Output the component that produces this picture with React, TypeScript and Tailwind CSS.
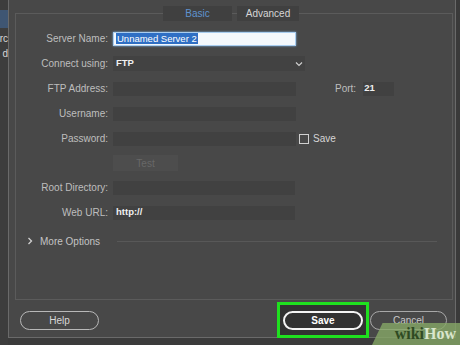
import React from "react";

function Field({ label, children }: { label: string; children?: React.ReactNode }) {
  return (
    <div className="flex h-[25px] items-center">
      <div className="w-[93px] pr-[1px] text-right text-[10px] text-[#bebebe]">{label}</div>
      <div className="ml-[4px] flex items-center">{children}</div>
    </div>
  );
}

function Box({ w, children }: { w: string; children?: React.ReactNode }) {
  return (
    <div className={`${w} flex h-[14px] items-center bg-[#414141] pl-[3px] text-[9.5px] font-semibold text-[#f0f0f0]`}>
      {children}
    </div>
  );
}

export default function App() {
  return (
    <div className="relative flex h-[345px] w-[460px] overflow-hidden bg-[#3b3b3b] font-['Liberation_Sans',Arial,sans-serif]">
      {/* sliver of the window behind */}
      <div className="flex w-[8px] flex-col overflow-hidden bg-[#3d3d3d]">
        <div className="mt-[10px] h-[18px] w-full bg-[#3f5673]" />
        <div className="mt-[4px] flex justify-end whitespace-nowrap text-[10px] leading-[13px] text-[#d8d8d8]">rc</div>
        <div className="mt-[2px] flex justify-end whitespace-nowrap text-[10px] leading-[13px] text-[#d8d8d8]">d</div>
      </div>

      {/* dialog */}
      <div className="flex h-[338px] w-[448px] flex-col border-b border-l border-r border-[#6a6a6a] bg-[#484848]">
        <div className="ml-[6px] mr-[2px] mt-[13px] flex h-[288px] flex-col border border-[#5b5b5b]">
          {/* tabs */}
          <div className="-mt-[8px] ml-[147px] flex h-[15px] gap-[5px] text-[10px]">
            <div className="flex w-[69px] items-center justify-center bg-[#404040] text-[#5f93cf]">Basic</div>
            <div className="flex w-[62px] items-center justify-center bg-[#404040] text-[#d6d6d6]">Advanced</div>
          </div>

          <div className="mt-[5px] flex flex-col">
            <Field label="Server Name:">
              <div className="flex h-[14px] w-[183px] items-center border border-[#a9cdef] bg-[#f4f8fc] pl-[2px] shadow-[0_0_2px_#7fb3e6]">
                <span className="bg-[#2f6fc4] px-[1px] text-[9.5px] leading-[11px] text-white">Unnamed Server 2</span>
              </div>
            </Field>
            <Field label="Connect using:">
              <div className="flex h-[15px] w-[192px] items-center justify-between bg-[#424242] pl-[3px] pr-[2px] text-[9.5px] font-semibold text-[#f0f0f0]">
                <span>FTP</span>
                <svg width="8" height="6" viewBox="0 0 8 6" fill="none" stroke="#cfcfcf" strokeWidth="1.2">
                  <path d="M1 1.5 L4 4.5 L7 1.5" />
                </svg>
              </div>
            </Field>
            <Field label="FTP Address:">
              <Box w="w-[183px]" />
              <span className="ml-[39px] text-[10px] text-[#bebebe]">Port:</span>
              <div className="ml-[7px] flex h-[14px] w-[31px] items-center bg-[#414141] pl-[1px] text-[9.5px] font-semibold text-[#f0f0f0]">21</div>
            </Field>
            <Field label="Username:">
              <Box w="w-[183px]" />
            </Field>
            <Field label="Password:">
              <Box w="w-[183px]" />
              <div className="ml-[3px] h-[10px] w-[10px] border border-[#d0d0d0]" />
              <span className="ml-[4px] text-[10px] text-[#d6d6d6]">Save</span>
            </Field>
            <div className="flex h-[24px] items-center pl-[97px]">
              <div className="flex h-[16px] w-[65px] items-center justify-center bg-[#4d4d4d] text-[10px] text-[#686868]">Test</div>
            </div>
            <Field label="Root Directory:">
              <Box w="w-[182px]" />
            </Field>
            <Field label="Web URL:">
              <Box w="w-[182px]">http://</Box>
            </Field>
            <div className="mt-[4px] flex h-[24px] items-center">
              <svg className="ml-[11px]" width="6" height="8" viewBox="0 0 6 8" fill="none" stroke="#d0d0d0" strokeWidth="1.3">
                <path d="M1.5 1 L4.5 4 L1.5 7" />
              </svg>
              <span className="ml-[7px] text-[10px] text-[#c4c4c4]">More Options</span>
              <div className="ml-[17px] h-px w-[320px] bg-[#585858]" />
            </div>
          </div>
        </div>

        {/* footer */}
        <div className="flex h-[37px] items-start">
          <button className="ml-[11px] mt-[11px] flex h-[19px] w-[79px] items-center justify-center rounded-full border border-[#b8b8b8] text-[10px] text-[#d8d8d8]">
            Help
          </button>
          <div className="ml-[178px] mt-[2px] flex h-[36px] w-[92px] items-start border-[3px] border-[#1fe01f] bg-[#323232] pl-[3px] pt-[6px]">
            <button className="flex h-[19px] w-[80px] items-center justify-center rounded-full border-2 border-[#f4f4f4] text-[10px] font-bold text-white">
              Save
            </button>
          </div>
          <button className="ml-[1px] mt-[11px] flex h-[19px] w-[77px] items-center justify-center rounded-full border border-[#a8a8a8] text-[10px] text-[#c8c8c8]">
            Cancel
          </button>
        </div>
      </div>

      <div className="flex-1 bg-[#3a3a3a]" />

      {/* watermark */}
      <div className="absolute bottom-0 right-0 flex h-[22px] w-[88px] items-center justify-end bg-[#86a866]/80 pr-[4px] [clip-path:polygon(12%_0,100%_0,100%_100%,0_100%)]">
        <span className="font-['Liberation_Serif',serif] text-[16px] font-bold leading-none text-[#2f4a22]">wiki</span>
        <span className="font-['Liberation_Serif',serif] text-[16px] font-bold leading-none text-[#d9e6cc]">How</span>
      </div>
    </div>
  );
}
